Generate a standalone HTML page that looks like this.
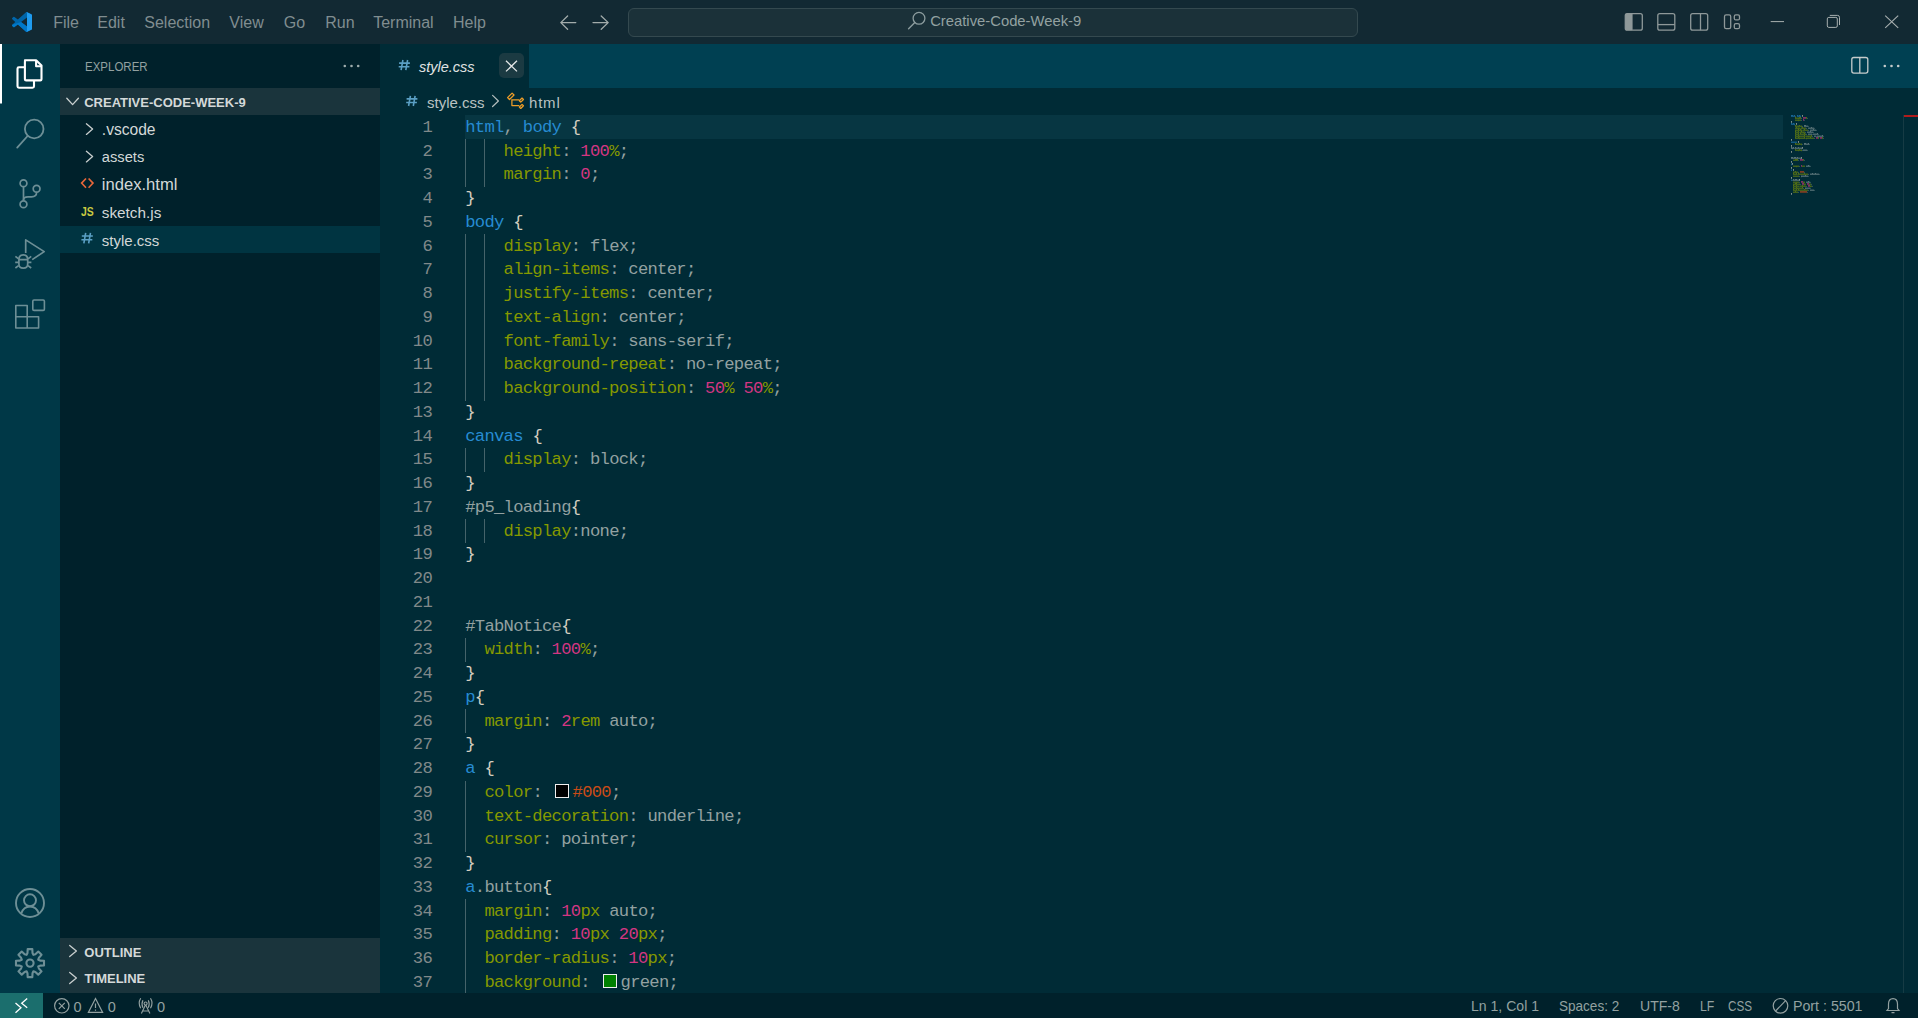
<!DOCTYPE html>
<html><head><meta charset="utf-8">
<style>
*{box-sizing:border-box;margin:0;padding:0}
html,body{width:1918px;height:1018px;overflow:hidden;background:#002b36;font-family:"Liberation Sans",sans-serif}
.abs{position:absolute}
#title{position:absolute;left:0;top:0;width:1918px;height:44px;background:#122933}
.menu{position:absolute;top:0;height:44px;line-height:44px;font-size:16px;color:#8a9799}
#act{position:absolute;left:0;top:44px;width:60px;height:949px;background:#003847}
#side{position:absolute;left:60px;top:44px;width:320px;height:949px;background:#00212b}
#tabs{position:absolute;left:380px;top:44px;width:1538px;height:44px;background:#004052}
#tab1{position:absolute;left:380px;top:44px;width:149px;height:44px;background:#002b36}
#status{position:absolute;left:0;top:993px;width:1918px;height:25px;background:#00212b}
.ln{position:absolute;left:465.2px;height:23.75px;line-height:23.75px;font-family:"Liberation Mono",monospace;font-size:17.2px;letter-spacing:-0.72px;white-space:pre;color:#93a1a1}
.lnum{position:absolute;left:380px;width:52px;text-align:right;height:23.75px;line-height:23.75px;font-family:"Liberation Mono",monospace;font-size:17.2px;letter-spacing:-0.72px;color:#80898a}
.ig{position:absolute;width:1px;height:23.75px;background:#45636a}
.sw{display:inline-block;width:14px;height:14px;border:1.4px solid #eee;margin:0 3.5px;vertical-align:-1px}
.sb{position:absolute;color:#93a1a1;font-size:14px;top:993px;height:25px;line-height:25px;white-space:pre}
</style></head><body>
<div id="title"></div>
<div id="act"></div>
<div id="side"></div>
<div id="tabs"></div>
<div id="tab1"></div>
<!-- line highlight -->
<div class="abs" style="left:465px;top:115.2px;width:1318px;height:23.5px;background:#073642"></div>
<div class="ln" style="top:115.80px"><span style="color:#268bd2">html</span><span style="color:#93a1a1">, </span><span style="color:#268bd2">body</span><span style="color:#93a1a1"> </span><span style="color:#d4cfc0">{</span></div>
<div class="lnum" style="top:115.80px">1</div>
<div class="ln" style="top:139.55px">    <span style="color:#859900">height</span><span style="color:#93a1a1">: </span><span style="color:#d33682">100</span><span style="color:#859900">%</span><span style="color:#93a1a1">;</span></div>
<div class="lnum" style="top:139.55px">2</div>
<div class="ig" style="left:465px;top:139.25px"></div>
<div class="ig" style="left:484px;top:139.25px"></div>
<div class="ln" style="top:163.30px">    <span style="color:#859900">margin</span><span style="color:#93a1a1">: </span><span style="color:#d33682">0</span><span style="color:#93a1a1">;</span></div>
<div class="lnum" style="top:163.30px">3</div>
<div class="ig" style="left:465px;top:163.00px"></div>
<div class="ig" style="left:484px;top:163.00px"></div>
<div class="ln" style="top:187.05px"><span style="color:#d4cfc0">}</span></div>
<div class="lnum" style="top:187.05px">4</div>
<div class="ln" style="top:210.80px"><span style="color:#268bd2">body</span><span style="color:#93a1a1"> </span><span style="color:#d4cfc0">{</span></div>
<div class="lnum" style="top:210.80px">5</div>
<div class="ln" style="top:234.55px">    <span style="color:#859900">display</span><span style="color:#93a1a1">: </span><span style="color:#93a1a1">flex</span><span style="color:#93a1a1">;</span></div>
<div class="lnum" style="top:234.55px">6</div>
<div class="ig" style="left:465px;top:234.25px"></div>
<div class="ig" style="left:484px;top:234.25px"></div>
<div class="ln" style="top:258.30px">    <span style="color:#859900">align-items</span><span style="color:#93a1a1">: </span><span style="color:#93a1a1">center</span><span style="color:#93a1a1">;</span></div>
<div class="lnum" style="top:258.30px">7</div>
<div class="ig" style="left:465px;top:258.00px"></div>
<div class="ig" style="left:484px;top:258.00px"></div>
<div class="ln" style="top:282.05px">    <span style="color:#859900">justify-items</span><span style="color:#93a1a1">: </span><span style="color:#93a1a1">center</span><span style="color:#93a1a1">;</span></div>
<div class="lnum" style="top:282.05px">8</div>
<div class="ig" style="left:465px;top:281.75px"></div>
<div class="ig" style="left:484px;top:281.75px"></div>
<div class="ln" style="top:305.80px">    <span style="color:#859900">text-align</span><span style="color:#93a1a1">: </span><span style="color:#93a1a1">center</span><span style="color:#93a1a1">;</span></div>
<div class="lnum" style="top:305.80px">9</div>
<div class="ig" style="left:465px;top:305.50px"></div>
<div class="ig" style="left:484px;top:305.50px"></div>
<div class="ln" style="top:329.55px">    <span style="color:#859900">font-family</span><span style="color:#93a1a1">: </span><span style="color:#93a1a1">sans-serif</span><span style="color:#93a1a1">;</span></div>
<div class="lnum" style="top:329.55px">10</div>
<div class="ig" style="left:465px;top:329.25px"></div>
<div class="ig" style="left:484px;top:329.25px"></div>
<div class="ln" style="top:353.30px">    <span style="color:#859900">background-repeat</span><span style="color:#93a1a1">: </span><span style="color:#93a1a1">no-repeat</span><span style="color:#93a1a1">;</span></div>
<div class="lnum" style="top:353.30px">11</div>
<div class="ig" style="left:465px;top:353.00px"></div>
<div class="ig" style="left:484px;top:353.00px"></div>
<div class="ln" style="top:377.05px">    <span style="color:#859900">background-position</span><span style="color:#93a1a1">: </span><span style="color:#d33682">50</span><span style="color:#859900">%</span><span style="color:#93a1a1"> </span><span style="color:#d33682">50</span><span style="color:#859900">%</span><span style="color:#93a1a1">;</span></div>
<div class="lnum" style="top:377.05px">12</div>
<div class="ig" style="left:465px;top:376.75px"></div>
<div class="ig" style="left:484px;top:376.75px"></div>
<div class="ln" style="top:400.80px"><span style="color:#d4cfc0">}</span></div>
<div class="lnum" style="top:400.80px">13</div>
<div class="ln" style="top:424.55px"><span style="color:#268bd2">canvas</span><span style="color:#93a1a1"> </span><span style="color:#d4cfc0">{</span></div>
<div class="lnum" style="top:424.55px">14</div>
<div class="ln" style="top:448.30px">    <span style="color:#859900">display</span><span style="color:#93a1a1">: </span><span style="color:#93a1a1">block</span><span style="color:#93a1a1">;</span></div>
<div class="lnum" style="top:448.30px">15</div>
<div class="ig" style="left:465px;top:448.00px"></div>
<div class="ig" style="left:484px;top:448.00px"></div>
<div class="ln" style="top:472.05px"><span style="color:#d4cfc0">}</span></div>
<div class="lnum" style="top:472.05px">16</div>
<div class="ln" style="top:495.80px"><span style="color:#93a1a1">#p5_loading</span><span style="color:#d4cfc0">{</span></div>
<div class="lnum" style="top:495.80px">17</div>
<div class="ln" style="top:519.55px">    <span style="color:#859900">display</span><span style="color:#93a1a1">:</span><span style="color:#93a1a1">none</span><span style="color:#93a1a1">;</span></div>
<div class="lnum" style="top:519.55px">18</div>
<div class="ig" style="left:465px;top:519.25px"></div>
<div class="ig" style="left:484px;top:519.25px"></div>
<div class="ln" style="top:543.30px"><span style="color:#d4cfc0">}</span></div>
<div class="lnum" style="top:543.30px">19</div>
<div class="ln" style="top:567.05px"></div>
<div class="lnum" style="top:567.05px">20</div>
<div class="ln" style="top:590.80px"></div>
<div class="lnum" style="top:590.80px">21</div>
<div class="ln" style="top:614.55px"><span style="color:#93a1a1">#TabNotice</span><span style="color:#d4cfc0">{</span></div>
<div class="lnum" style="top:614.55px">22</div>
<div class="ln" style="top:638.30px">  <span style="color:#859900">width</span><span style="color:#93a1a1">: </span><span style="color:#d33682">100</span><span style="color:#859900">%</span><span style="color:#93a1a1">;</span></div>
<div class="lnum" style="top:638.30px">23</div>
<div class="ig" style="left:465px;top:638.00px"></div>
<div class="ln" style="top:662.05px"><span style="color:#d4cfc0">}</span></div>
<div class="lnum" style="top:662.05px">24</div>
<div class="ln" style="top:685.80px"><span style="color:#268bd2">p</span><span style="color:#d4cfc0">{</span></div>
<div class="lnum" style="top:685.80px">25</div>
<div class="ln" style="top:709.55px">  <span style="color:#859900">margin</span><span style="color:#93a1a1">: </span><span style="color:#d33682">2</span><span style="color:#859900">rem</span><span style="color:#93a1a1"> </span><span style="color:#93a1a1">auto</span><span style="color:#93a1a1">;</span></div>
<div class="lnum" style="top:709.55px">26</div>
<div class="ig" style="left:465px;top:709.25px"></div>
<div class="ln" style="top:733.30px"><span style="color:#d4cfc0">}</span></div>
<div class="lnum" style="top:733.30px">27</div>
<div class="ln" style="top:757.05px"><span style="color:#268bd2">a</span><span style="color:#93a1a1"> </span><span style="color:#d4cfc0">{</span></div>
<div class="lnum" style="top:757.05px">28</div>
<div class="ln" style="top:780.80px">  <span style="color:#859900">color</span><span style="color:#93a1a1">: </span><span class="sw" style="background:#000"></span><span style="color:#cb4b16">#000</span><span style="color:#93a1a1">;</span></div>
<div class="lnum" style="top:780.80px">29</div>
<div class="ig" style="left:465px;top:780.50px"></div>
<div class="ln" style="top:804.55px">  <span style="color:#859900">text-decoration</span><span style="color:#93a1a1">: </span><span style="color:#93a1a1">underline</span><span style="color:#93a1a1">;</span></div>
<div class="lnum" style="top:804.55px">30</div>
<div class="ig" style="left:465px;top:804.25px"></div>
<div class="ln" style="top:828.30px">  <span style="color:#859900">cursor</span><span style="color:#93a1a1">: </span><span style="color:#93a1a1">pointer</span><span style="color:#93a1a1">;</span></div>
<div class="lnum" style="top:828.30px">31</div>
<div class="ig" style="left:465px;top:828.00px"></div>
<div class="ln" style="top:852.05px"><span style="color:#d4cfc0">}</span></div>
<div class="lnum" style="top:852.05px">32</div>
<div class="ln" style="top:875.80px"><span style="color:#268bd2">a</span><span style="color:#93a1a1">.button</span><span style="color:#d4cfc0">{</span></div>
<div class="lnum" style="top:875.80px">33</div>
<div class="ln" style="top:899.55px">  <span style="color:#859900">margin</span><span style="color:#93a1a1">: </span><span style="color:#d33682">10</span><span style="color:#859900">px</span><span style="color:#93a1a1"> </span><span style="color:#93a1a1">auto</span><span style="color:#93a1a1">;</span></div>
<div class="lnum" style="top:899.55px">34</div>
<div class="ig" style="left:465px;top:899.25px"></div>
<div class="ln" style="top:923.30px">  <span style="color:#859900">padding</span><span style="color:#93a1a1">: </span><span style="color:#d33682">10</span><span style="color:#859900">px</span><span style="color:#93a1a1"> </span><span style="color:#d33682">20</span><span style="color:#859900">px</span><span style="color:#93a1a1">;</span></div>
<div class="lnum" style="top:923.30px">35</div>
<div class="ig" style="left:465px;top:923.00px"></div>
<div class="ln" style="top:947.05px">  <span style="color:#859900">border-radius</span><span style="color:#93a1a1">: </span><span style="color:#d33682">10</span><span style="color:#859900">px</span><span style="color:#93a1a1">;</span></div>
<div class="lnum" style="top:947.05px">36</div>
<div class="ig" style="left:465px;top:946.75px"></div>
<div class="ln" style="top:970.80px">  <span style="color:#859900">background</span><span style="color:#93a1a1">: </span><span class="sw" style="background:#008000"></span><span style="color:#93a1a1">green</span><span style="color:#93a1a1">;</span></div>
<div class="lnum" style="top:970.80px">37</div>
<div class="ig" style="left:465px;top:970.50px"></div>
<svg class="mm" width="1918" height="300" style="position:absolute;left:0;top:0"><rect x="1791" y="115.0" width="1" height="1.8" fill="#268bd2" fill-opacity="0.6"/><rect x="1792" y="115.0" width="1" height="1.8" fill="#268bd2" fill-opacity="0.6"/><rect x="1793" y="115.6" width="1" height="1.2" fill="#268bd2" fill-opacity="0.6"/><rect x="1794" y="115.0" width="1" height="1.8" fill="#268bd2" fill-opacity="0.6"/><rect x="1795" y="115.9" width="1" height="0.8" fill="#93a1a1" fill-opacity="0.45"/><rect x="1797" y="115.0" width="1" height="1.8" fill="#268bd2" fill-opacity="0.6"/><rect x="1798" y="115.6" width="1" height="1.2" fill="#268bd2" fill-opacity="0.6"/><rect x="1799" y="115.0" width="1" height="1.8" fill="#268bd2" fill-opacity="0.6"/><rect x="1800" y="115.5" width="1" height="1.7" fill="#268bd2" fill-opacity="0.55"/><rect x="1802" y="115.0" width="1" height="1.8" fill="#d4cfc0" fill-opacity="0.6"/><rect x="1795" y="117.0" width="1" height="1.8" fill="#859900" fill-opacity="0.6"/><rect x="1796" y="117.6" width="1" height="1.2" fill="#859900" fill-opacity="0.6"/><rect x="1797" y="117.6" width="1" height="1.2" fill="#859900" fill-opacity="0.6"/><rect x="1798" y="117.5" width="1" height="1.7" fill="#859900" fill-opacity="0.55"/><rect x="1799" y="117.0" width="1" height="1.8" fill="#859900" fill-opacity="0.6"/><rect x="1800" y="117.0" width="1" height="1.8" fill="#859900" fill-opacity="0.6"/><rect x="1801" y="117.9" width="1" height="0.8" fill="#93a1a1" fill-opacity="0.45"/><rect x="1803" y="117.0" width="1" height="1.8" fill="#d33682" fill-opacity="0.6"/><rect x="1804" y="117.0" width="1" height="1.8" fill="#d33682" fill-opacity="0.6"/><rect x="1805" y="117.0" width="1" height="1.8" fill="#d33682" fill-opacity="0.6"/><rect x="1806" y="117.0" width="1" height="1.8" fill="#859900" fill-opacity="0.6"/><rect x="1807" y="117.9" width="1" height="0.8" fill="#93a1a1" fill-opacity="0.45"/><rect x="1795" y="119.6" width="1" height="1.2" fill="#859900" fill-opacity="0.6"/><rect x="1796" y="119.6" width="1" height="1.2" fill="#859900" fill-opacity="0.6"/><rect x="1797" y="119.6" width="1" height="1.2" fill="#859900" fill-opacity="0.6"/><rect x="1798" y="119.5" width="1" height="1.7" fill="#859900" fill-opacity="0.55"/><rect x="1799" y="119.6" width="1" height="1.2" fill="#859900" fill-opacity="0.6"/><rect x="1800" y="119.6" width="1" height="1.2" fill="#859900" fill-opacity="0.6"/><rect x="1801" y="119.9" width="1" height="0.8" fill="#93a1a1" fill-opacity="0.45"/><rect x="1803" y="119.0" width="1" height="1.8" fill="#d33682" fill-opacity="0.6"/><rect x="1804" y="119.9" width="1" height="0.8" fill="#93a1a1" fill-opacity="0.45"/><rect x="1791" y="121.0" width="1" height="1.8" fill="#d4cfc0" fill-opacity="0.6"/><rect x="1791" y="123.0" width="1" height="1.8" fill="#268bd2" fill-opacity="0.6"/><rect x="1792" y="123.6" width="1" height="1.2" fill="#268bd2" fill-opacity="0.6"/><rect x="1793" y="123.0" width="1" height="1.8" fill="#268bd2" fill-opacity="0.6"/><rect x="1794" y="123.5" width="1" height="1.7" fill="#268bd2" fill-opacity="0.55"/><rect x="1796" y="123.0" width="1" height="1.8" fill="#d4cfc0" fill-opacity="0.6"/><rect x="1795" y="125.0" width="1" height="1.8" fill="#859900" fill-opacity="0.6"/><rect x="1796" y="125.6" width="1" height="1.2" fill="#859900" fill-opacity="0.6"/><rect x="1797" y="125.6" width="1" height="1.2" fill="#859900" fill-opacity="0.6"/><rect x="1798" y="125.5" width="1" height="1.7" fill="#859900" fill-opacity="0.55"/><rect x="1799" y="125.0" width="1" height="1.8" fill="#859900" fill-opacity="0.6"/><rect x="1800" y="125.6" width="1" height="1.2" fill="#859900" fill-opacity="0.6"/><rect x="1801" y="125.5" width="1" height="1.7" fill="#859900" fill-opacity="0.55"/><rect x="1802" y="125.9" width="1" height="0.8" fill="#93a1a1" fill-opacity="0.45"/><rect x="1804" y="125.0" width="1" height="1.8" fill="#93a1a1" fill-opacity="0.6"/><rect x="1805" y="125.0" width="1" height="1.8" fill="#93a1a1" fill-opacity="0.6"/><rect x="1806" y="125.6" width="1" height="1.2" fill="#93a1a1" fill-opacity="0.6"/><rect x="1807" y="125.6" width="1" height="1.2" fill="#93a1a1" fill-opacity="0.6"/><rect x="1808" y="125.9" width="1" height="0.8" fill="#93a1a1" fill-opacity="0.45"/><rect x="1795" y="127.6" width="1" height="1.2" fill="#859900" fill-opacity="0.6"/><rect x="1796" y="127.0" width="1" height="1.8" fill="#859900" fill-opacity="0.6"/><rect x="1797" y="127.6" width="1" height="1.2" fill="#859900" fill-opacity="0.6"/><rect x="1798" y="127.5" width="1" height="1.7" fill="#859900" fill-opacity="0.55"/><rect x="1799" y="127.6" width="1" height="1.2" fill="#859900" fill-opacity="0.6"/><rect x="1800" y="127.9" width="1" height="0.8" fill="#859900" fill-opacity="0.45"/><rect x="1801" y="127.6" width="1" height="1.2" fill="#859900" fill-opacity="0.6"/><rect x="1802" y="127.0" width="1" height="1.8" fill="#859900" fill-opacity="0.6"/><rect x="1803" y="127.6" width="1" height="1.2" fill="#859900" fill-opacity="0.6"/><rect x="1804" y="127.6" width="1" height="1.2" fill="#859900" fill-opacity="0.6"/><rect x="1805" y="127.6" width="1" height="1.2" fill="#859900" fill-opacity="0.6"/><rect x="1806" y="127.9" width="1" height="0.8" fill="#93a1a1" fill-opacity="0.45"/><rect x="1808" y="127.6" width="1" height="1.2" fill="#93a1a1" fill-opacity="0.6"/><rect x="1809" y="127.6" width="1" height="1.2" fill="#93a1a1" fill-opacity="0.6"/><rect x="1810" y="127.6" width="1" height="1.2" fill="#93a1a1" fill-opacity="0.6"/><rect x="1811" y="127.0" width="1" height="1.8" fill="#93a1a1" fill-opacity="0.6"/><rect x="1812" y="127.6" width="1" height="1.2" fill="#93a1a1" fill-opacity="0.6"/><rect x="1813" y="127.6" width="1" height="1.2" fill="#93a1a1" fill-opacity="0.6"/><rect x="1814" y="127.9" width="1" height="0.8" fill="#93a1a1" fill-opacity="0.45"/><rect x="1795" y="129.5" width="1" height="1.7" fill="#859900" fill-opacity="0.55"/><rect x="1796" y="129.6" width="1" height="1.2" fill="#859900" fill-opacity="0.6"/><rect x="1797" y="129.6" width="1" height="1.2" fill="#859900" fill-opacity="0.6"/><rect x="1798" y="129.0" width="1" height="1.8" fill="#859900" fill-opacity="0.6"/><rect x="1799" y="129.6" width="1" height="1.2" fill="#859900" fill-opacity="0.6"/><rect x="1800" y="129.0" width="1" height="1.8" fill="#859900" fill-opacity="0.6"/><rect x="1801" y="129.5" width="1" height="1.7" fill="#859900" fill-opacity="0.55"/><rect x="1802" y="129.9" width="1" height="0.8" fill="#859900" fill-opacity="0.45"/><rect x="1803" y="129.6" width="1" height="1.2" fill="#859900" fill-opacity="0.6"/><rect x="1804" y="129.0" width="1" height="1.8" fill="#859900" fill-opacity="0.6"/><rect x="1805" y="129.6" width="1" height="1.2" fill="#859900" fill-opacity="0.6"/><rect x="1806" y="129.6" width="1" height="1.2" fill="#859900" fill-opacity="0.6"/><rect x="1807" y="129.6" width="1" height="1.2" fill="#859900" fill-opacity="0.6"/><rect x="1808" y="129.9" width="1" height="0.8" fill="#93a1a1" fill-opacity="0.45"/><rect x="1810" y="129.6" width="1" height="1.2" fill="#93a1a1" fill-opacity="0.6"/><rect x="1811" y="129.6" width="1" height="1.2" fill="#93a1a1" fill-opacity="0.6"/><rect x="1812" y="129.6" width="1" height="1.2" fill="#93a1a1" fill-opacity="0.6"/><rect x="1813" y="129.0" width="1" height="1.8" fill="#93a1a1" fill-opacity="0.6"/><rect x="1814" y="129.6" width="1" height="1.2" fill="#93a1a1" fill-opacity="0.6"/><rect x="1815" y="129.6" width="1" height="1.2" fill="#93a1a1" fill-opacity="0.6"/><rect x="1816" y="129.9" width="1" height="0.8" fill="#93a1a1" fill-opacity="0.45"/><rect x="1795" y="131.0" width="1" height="1.8" fill="#859900" fill-opacity="0.6"/><rect x="1796" y="131.6" width="1" height="1.2" fill="#859900" fill-opacity="0.6"/><rect x="1797" y="131.6" width="1" height="1.2" fill="#859900" fill-opacity="0.6"/><rect x="1798" y="131.0" width="1" height="1.8" fill="#859900" fill-opacity="0.6"/><rect x="1799" y="131.9" width="1" height="0.8" fill="#859900" fill-opacity="0.45"/><rect x="1800" y="131.6" width="1" height="1.2" fill="#859900" fill-opacity="0.6"/><rect x="1801" y="131.0" width="1" height="1.8" fill="#859900" fill-opacity="0.6"/><rect x="1802" y="131.6" width="1" height="1.2" fill="#859900" fill-opacity="0.6"/><rect x="1803" y="131.5" width="1" height="1.7" fill="#859900" fill-opacity="0.55"/><rect x="1804" y="131.6" width="1" height="1.2" fill="#859900" fill-opacity="0.6"/><rect x="1805" y="131.9" width="1" height="0.8" fill="#93a1a1" fill-opacity="0.45"/><rect x="1807" y="131.6" width="1" height="1.2" fill="#93a1a1" fill-opacity="0.6"/><rect x="1808" y="131.6" width="1" height="1.2" fill="#93a1a1" fill-opacity="0.6"/><rect x="1809" y="131.6" width="1" height="1.2" fill="#93a1a1" fill-opacity="0.6"/><rect x="1810" y="131.0" width="1" height="1.8" fill="#93a1a1" fill-opacity="0.6"/><rect x="1811" y="131.6" width="1" height="1.2" fill="#93a1a1" fill-opacity="0.6"/><rect x="1812" y="131.6" width="1" height="1.2" fill="#93a1a1" fill-opacity="0.6"/><rect x="1813" y="131.9" width="1" height="0.8" fill="#93a1a1" fill-opacity="0.45"/><rect x="1795" y="133.0" width="1" height="1.8" fill="#859900" fill-opacity="0.6"/><rect x="1796" y="133.6" width="1" height="1.2" fill="#859900" fill-opacity="0.6"/><rect x="1797" y="133.6" width="1" height="1.2" fill="#859900" fill-opacity="0.6"/><rect x="1798" y="133.0" width="1" height="1.8" fill="#859900" fill-opacity="0.6"/><rect x="1799" y="133.9" width="1" height="0.8" fill="#859900" fill-opacity="0.45"/><rect x="1800" y="133.0" width="1" height="1.8" fill="#859900" fill-opacity="0.6"/><rect x="1801" y="133.6" width="1" height="1.2" fill="#859900" fill-opacity="0.6"/><rect x="1802" y="133.6" width="1" height="1.2" fill="#859900" fill-opacity="0.6"/><rect x="1803" y="133.6" width="1" height="1.2" fill="#859900" fill-opacity="0.6"/><rect x="1804" y="133.0" width="1" height="1.8" fill="#859900" fill-opacity="0.6"/><rect x="1805" y="133.5" width="1" height="1.7" fill="#859900" fill-opacity="0.55"/><rect x="1806" y="133.9" width="1" height="0.8" fill="#93a1a1" fill-opacity="0.45"/><rect x="1808" y="133.6" width="1" height="1.2" fill="#93a1a1" fill-opacity="0.6"/><rect x="1809" y="133.6" width="1" height="1.2" fill="#93a1a1" fill-opacity="0.6"/><rect x="1810" y="133.6" width="1" height="1.2" fill="#93a1a1" fill-opacity="0.6"/><rect x="1811" y="133.6" width="1" height="1.2" fill="#93a1a1" fill-opacity="0.6"/><rect x="1812" y="133.9" width="1" height="0.8" fill="#93a1a1" fill-opacity="0.45"/><rect x="1813" y="133.6" width="1" height="1.2" fill="#93a1a1" fill-opacity="0.6"/><rect x="1814" y="133.6" width="1" height="1.2" fill="#93a1a1" fill-opacity="0.6"/><rect x="1815" y="133.6" width="1" height="1.2" fill="#93a1a1" fill-opacity="0.6"/><rect x="1816" y="133.6" width="1" height="1.2" fill="#93a1a1" fill-opacity="0.6"/><rect x="1817" y="133.0" width="1" height="1.8" fill="#93a1a1" fill-opacity="0.6"/><rect x="1818" y="133.9" width="1" height="0.8" fill="#93a1a1" fill-opacity="0.45"/><rect x="1795" y="135.0" width="1" height="1.8" fill="#859900" fill-opacity="0.6"/><rect x="1796" y="135.6" width="1" height="1.2" fill="#859900" fill-opacity="0.6"/><rect x="1797" y="135.6" width="1" height="1.2" fill="#859900" fill-opacity="0.6"/><rect x="1798" y="135.0" width="1" height="1.8" fill="#859900" fill-opacity="0.6"/><rect x="1799" y="135.5" width="1" height="1.7" fill="#859900" fill-opacity="0.55"/><rect x="1800" y="135.6" width="1" height="1.2" fill="#859900" fill-opacity="0.6"/><rect x="1801" y="135.6" width="1" height="1.2" fill="#859900" fill-opacity="0.6"/><rect x="1802" y="135.6" width="1" height="1.2" fill="#859900" fill-opacity="0.6"/><rect x="1803" y="135.6" width="1" height="1.2" fill="#859900" fill-opacity="0.6"/><rect x="1804" y="135.0" width="1" height="1.8" fill="#859900" fill-opacity="0.6"/><rect x="1805" y="135.9" width="1" height="0.8" fill="#859900" fill-opacity="0.45"/><rect x="1806" y="135.6" width="1" height="1.2" fill="#859900" fill-opacity="0.6"/><rect x="1807" y="135.6" width="1" height="1.2" fill="#859900" fill-opacity="0.6"/><rect x="1808" y="135.5" width="1" height="1.7" fill="#859900" fill-opacity="0.55"/><rect x="1809" y="135.6" width="1" height="1.2" fill="#859900" fill-opacity="0.6"/><rect x="1810" y="135.6" width="1" height="1.2" fill="#859900" fill-opacity="0.6"/><rect x="1811" y="135.0" width="1" height="1.8" fill="#859900" fill-opacity="0.6"/><rect x="1812" y="135.9" width="1" height="0.8" fill="#93a1a1" fill-opacity="0.45"/><rect x="1814" y="135.6" width="1" height="1.2" fill="#93a1a1" fill-opacity="0.6"/><rect x="1815" y="135.6" width="1" height="1.2" fill="#93a1a1" fill-opacity="0.6"/><rect x="1816" y="135.9" width="1" height="0.8" fill="#93a1a1" fill-opacity="0.45"/><rect x="1817" y="135.6" width="1" height="1.2" fill="#93a1a1" fill-opacity="0.6"/><rect x="1818" y="135.6" width="1" height="1.2" fill="#93a1a1" fill-opacity="0.6"/><rect x="1819" y="135.5" width="1" height="1.7" fill="#93a1a1" fill-opacity="0.55"/><rect x="1820" y="135.6" width="1" height="1.2" fill="#93a1a1" fill-opacity="0.6"/><rect x="1821" y="135.6" width="1" height="1.2" fill="#93a1a1" fill-opacity="0.6"/><rect x="1822" y="135.0" width="1" height="1.8" fill="#93a1a1" fill-opacity="0.6"/><rect x="1823" y="135.9" width="1" height="0.8" fill="#93a1a1" fill-opacity="0.45"/><rect x="1795" y="137.0" width="1" height="1.8" fill="#859900" fill-opacity="0.6"/><rect x="1796" y="137.6" width="1" height="1.2" fill="#859900" fill-opacity="0.6"/><rect x="1797" y="137.6" width="1" height="1.2" fill="#859900" fill-opacity="0.6"/><rect x="1798" y="137.0" width="1" height="1.8" fill="#859900" fill-opacity="0.6"/><rect x="1799" y="137.5" width="1" height="1.7" fill="#859900" fill-opacity="0.55"/><rect x="1800" y="137.6" width="1" height="1.2" fill="#859900" fill-opacity="0.6"/><rect x="1801" y="137.6" width="1" height="1.2" fill="#859900" fill-opacity="0.6"/><rect x="1802" y="137.6" width="1" height="1.2" fill="#859900" fill-opacity="0.6"/><rect x="1803" y="137.6" width="1" height="1.2" fill="#859900" fill-opacity="0.6"/><rect x="1804" y="137.0" width="1" height="1.8" fill="#859900" fill-opacity="0.6"/><rect x="1805" y="137.9" width="1" height="0.8" fill="#859900" fill-opacity="0.45"/><rect x="1806" y="137.5" width="1" height="1.7" fill="#859900" fill-opacity="0.55"/><rect x="1807" y="137.6" width="1" height="1.2" fill="#859900" fill-opacity="0.6"/><rect x="1808" y="137.6" width="1" height="1.2" fill="#859900" fill-opacity="0.6"/><rect x="1809" y="137.6" width="1" height="1.2" fill="#859900" fill-opacity="0.6"/><rect x="1810" y="137.0" width="1" height="1.8" fill="#859900" fill-opacity="0.6"/><rect x="1811" y="137.6" width="1" height="1.2" fill="#859900" fill-opacity="0.6"/><rect x="1812" y="137.6" width="1" height="1.2" fill="#859900" fill-opacity="0.6"/><rect x="1813" y="137.6" width="1" height="1.2" fill="#859900" fill-opacity="0.6"/><rect x="1814" y="137.9" width="1" height="0.8" fill="#93a1a1" fill-opacity="0.45"/><rect x="1816" y="137.0" width="1" height="1.8" fill="#d33682" fill-opacity="0.6"/><rect x="1817" y="137.0" width="1" height="1.8" fill="#d33682" fill-opacity="0.6"/><rect x="1818" y="137.0" width="1" height="1.8" fill="#859900" fill-opacity="0.6"/><rect x="1820" y="137.0" width="1" height="1.8" fill="#d33682" fill-opacity="0.6"/><rect x="1821" y="137.0" width="1" height="1.8" fill="#d33682" fill-opacity="0.6"/><rect x="1822" y="137.0" width="1" height="1.8" fill="#859900" fill-opacity="0.6"/><rect x="1823" y="137.9" width="1" height="0.8" fill="#93a1a1" fill-opacity="0.45"/><rect x="1791" y="139.0" width="1" height="1.8" fill="#d4cfc0" fill-opacity="0.6"/><rect x="1791" y="141.6" width="1" height="1.2" fill="#268bd2" fill-opacity="0.6"/><rect x="1792" y="141.6" width="1" height="1.2" fill="#268bd2" fill-opacity="0.6"/><rect x="1793" y="141.6" width="1" height="1.2" fill="#268bd2" fill-opacity="0.6"/><rect x="1794" y="141.6" width="1" height="1.2" fill="#268bd2" fill-opacity="0.6"/><rect x="1795" y="141.6" width="1" height="1.2" fill="#268bd2" fill-opacity="0.6"/><rect x="1796" y="141.6" width="1" height="1.2" fill="#268bd2" fill-opacity="0.6"/><rect x="1798" y="141.0" width="1" height="1.8" fill="#d4cfc0" fill-opacity="0.6"/><rect x="1795" y="143.0" width="1" height="1.8" fill="#859900" fill-opacity="0.6"/><rect x="1796" y="143.6" width="1" height="1.2" fill="#859900" fill-opacity="0.6"/><rect x="1797" y="143.6" width="1" height="1.2" fill="#859900" fill-opacity="0.6"/><rect x="1798" y="143.5" width="1" height="1.7" fill="#859900" fill-opacity="0.55"/><rect x="1799" y="143.0" width="1" height="1.8" fill="#859900" fill-opacity="0.6"/><rect x="1800" y="143.6" width="1" height="1.2" fill="#859900" fill-opacity="0.6"/><rect x="1801" y="143.5" width="1" height="1.7" fill="#859900" fill-opacity="0.55"/><rect x="1802" y="143.9" width="1" height="0.8" fill="#93a1a1" fill-opacity="0.45"/><rect x="1804" y="143.0" width="1" height="1.8" fill="#93a1a1" fill-opacity="0.6"/><rect x="1805" y="143.0" width="1" height="1.8" fill="#93a1a1" fill-opacity="0.6"/><rect x="1806" y="143.6" width="1" height="1.2" fill="#93a1a1" fill-opacity="0.6"/><rect x="1807" y="143.6" width="1" height="1.2" fill="#93a1a1" fill-opacity="0.6"/><rect x="1808" y="143.0" width="1" height="1.8" fill="#93a1a1" fill-opacity="0.6"/><rect x="1809" y="143.9" width="1" height="0.8" fill="#93a1a1" fill-opacity="0.45"/><rect x="1791" y="145.0" width="1" height="1.8" fill="#d4cfc0" fill-opacity="0.6"/><rect x="1791" y="147.0" width="1" height="1.8" fill="#93a1a1" fill-opacity="0.6"/><rect x="1792" y="147.5" width="1" height="1.7" fill="#93a1a1" fill-opacity="0.55"/><rect x="1793" y="147.0" width="1" height="1.8" fill="#93a1a1" fill-opacity="0.6"/><rect x="1794" y="147.9" width="1" height="0.8" fill="#93a1a1" fill-opacity="0.45"/><rect x="1795" y="147.0" width="1" height="1.8" fill="#93a1a1" fill-opacity="0.6"/><rect x="1796" y="147.6" width="1" height="1.2" fill="#93a1a1" fill-opacity="0.6"/><rect x="1797" y="147.6" width="1" height="1.2" fill="#93a1a1" fill-opacity="0.6"/><rect x="1798" y="147.0" width="1" height="1.8" fill="#93a1a1" fill-opacity="0.6"/><rect x="1799" y="147.6" width="1" height="1.2" fill="#93a1a1" fill-opacity="0.6"/><rect x="1800" y="147.6" width="1" height="1.2" fill="#93a1a1" fill-opacity="0.6"/><rect x="1801" y="147.5" width="1" height="1.7" fill="#93a1a1" fill-opacity="0.55"/><rect x="1802" y="147.0" width="1" height="1.8" fill="#d4cfc0" fill-opacity="0.6"/><rect x="1795" y="149.0" width="1" height="1.8" fill="#859900" fill-opacity="0.6"/><rect x="1796" y="149.6" width="1" height="1.2" fill="#859900" fill-opacity="0.6"/><rect x="1797" y="149.6" width="1" height="1.2" fill="#859900" fill-opacity="0.6"/><rect x="1798" y="149.5" width="1" height="1.7" fill="#859900" fill-opacity="0.55"/><rect x="1799" y="149.0" width="1" height="1.8" fill="#859900" fill-opacity="0.6"/><rect x="1800" y="149.6" width="1" height="1.2" fill="#859900" fill-opacity="0.6"/><rect x="1801" y="149.5" width="1" height="1.7" fill="#859900" fill-opacity="0.55"/><rect x="1802" y="149.9" width="1" height="0.8" fill="#93a1a1" fill-opacity="0.45"/><rect x="1803" y="149.6" width="1" height="1.2" fill="#93a1a1" fill-opacity="0.6"/><rect x="1804" y="149.6" width="1" height="1.2" fill="#93a1a1" fill-opacity="0.6"/><rect x="1805" y="149.6" width="1" height="1.2" fill="#93a1a1" fill-opacity="0.6"/><rect x="1806" y="149.6" width="1" height="1.2" fill="#93a1a1" fill-opacity="0.6"/><rect x="1807" y="149.9" width="1" height="0.8" fill="#93a1a1" fill-opacity="0.45"/><rect x="1791" y="151.0" width="1" height="1.8" fill="#d4cfc0" fill-opacity="0.6"/><rect x="1791" y="157.0" width="1" height="1.8" fill="#93a1a1" fill-opacity="0.6"/><rect x="1792" y="157.0" width="1" height="1.8" fill="#93a1a1" fill-opacity="0.6"/><rect x="1793" y="157.6" width="1" height="1.2" fill="#93a1a1" fill-opacity="0.6"/><rect x="1794" y="157.0" width="1" height="1.8" fill="#93a1a1" fill-opacity="0.6"/><rect x="1795" y="157.0" width="1" height="1.8" fill="#93a1a1" fill-opacity="0.6"/><rect x="1796" y="157.6" width="1" height="1.2" fill="#93a1a1" fill-opacity="0.6"/><rect x="1797" y="157.0" width="1" height="1.8" fill="#93a1a1" fill-opacity="0.6"/><rect x="1798" y="157.6" width="1" height="1.2" fill="#93a1a1" fill-opacity="0.6"/><rect x="1799" y="157.6" width="1" height="1.2" fill="#93a1a1" fill-opacity="0.6"/><rect x="1800" y="157.6" width="1" height="1.2" fill="#93a1a1" fill-opacity="0.6"/><rect x="1801" y="157.0" width="1" height="1.8" fill="#d4cfc0" fill-opacity="0.6"/><rect x="1793" y="159.6" width="1" height="1.2" fill="#859900" fill-opacity="0.6"/><rect x="1794" y="159.6" width="1" height="1.2" fill="#859900" fill-opacity="0.6"/><rect x="1795" y="159.0" width="1" height="1.8" fill="#859900" fill-opacity="0.6"/><rect x="1796" y="159.0" width="1" height="1.8" fill="#859900" fill-opacity="0.6"/><rect x="1797" y="159.0" width="1" height="1.8" fill="#859900" fill-opacity="0.6"/><rect x="1798" y="159.9" width="1" height="0.8" fill="#93a1a1" fill-opacity="0.45"/><rect x="1800" y="159.0" width="1" height="1.8" fill="#d33682" fill-opacity="0.6"/><rect x="1801" y="159.0" width="1" height="1.8" fill="#d33682" fill-opacity="0.6"/><rect x="1802" y="159.0" width="1" height="1.8" fill="#d33682" fill-opacity="0.6"/><rect x="1803" y="159.0" width="1" height="1.8" fill="#859900" fill-opacity="0.6"/><rect x="1804" y="159.9" width="1" height="0.8" fill="#93a1a1" fill-opacity="0.45"/><rect x="1791" y="161.0" width="1" height="1.8" fill="#d4cfc0" fill-opacity="0.6"/><rect x="1791" y="163.5" width="1" height="1.7" fill="#268bd2" fill-opacity="0.55"/><rect x="1792" y="163.0" width="1" height="1.8" fill="#d4cfc0" fill-opacity="0.6"/><rect x="1793" y="165.6" width="1" height="1.2" fill="#859900" fill-opacity="0.6"/><rect x="1794" y="165.6" width="1" height="1.2" fill="#859900" fill-opacity="0.6"/><rect x="1795" y="165.6" width="1" height="1.2" fill="#859900" fill-opacity="0.6"/><rect x="1796" y="165.5" width="1" height="1.7" fill="#859900" fill-opacity="0.55"/><rect x="1797" y="165.6" width="1" height="1.2" fill="#859900" fill-opacity="0.6"/><rect x="1798" y="165.6" width="1" height="1.2" fill="#859900" fill-opacity="0.6"/><rect x="1799" y="165.9" width="1" height="0.8" fill="#93a1a1" fill-opacity="0.45"/><rect x="1801" y="165.0" width="1" height="1.8" fill="#d33682" fill-opacity="0.6"/><rect x="1802" y="165.6" width="1" height="1.2" fill="#859900" fill-opacity="0.6"/><rect x="1803" y="165.6" width="1" height="1.2" fill="#859900" fill-opacity="0.6"/><rect x="1804" y="165.6" width="1" height="1.2" fill="#859900" fill-opacity="0.6"/><rect x="1806" y="165.6" width="1" height="1.2" fill="#93a1a1" fill-opacity="0.6"/><rect x="1807" y="165.6" width="1" height="1.2" fill="#93a1a1" fill-opacity="0.6"/><rect x="1808" y="165.0" width="1" height="1.8" fill="#93a1a1" fill-opacity="0.6"/><rect x="1809" y="165.6" width="1" height="1.2" fill="#93a1a1" fill-opacity="0.6"/><rect x="1810" y="165.9" width="1" height="0.8" fill="#93a1a1" fill-opacity="0.45"/><rect x="1791" y="167.0" width="1" height="1.8" fill="#d4cfc0" fill-opacity="0.6"/><rect x="1791" y="169.6" width="1" height="1.2" fill="#268bd2" fill-opacity="0.6"/><rect x="1793" y="169.0" width="1" height="1.8" fill="#d4cfc0" fill-opacity="0.6"/><rect x="1793" y="171.6" width="1" height="1.2" fill="#859900" fill-opacity="0.6"/><rect x="1794" y="171.6" width="1" height="1.2" fill="#859900" fill-opacity="0.6"/><rect x="1795" y="171.0" width="1" height="1.8" fill="#859900" fill-opacity="0.6"/><rect x="1796" y="171.6" width="1" height="1.2" fill="#859900" fill-opacity="0.6"/><rect x="1797" y="171.6" width="1" height="1.2" fill="#859900" fill-opacity="0.6"/><rect x="1798" y="171.9" width="1" height="0.8" fill="#93a1a1" fill-opacity="0.45"/><rect x="1800" y="171.0" width="1" height="1.8" fill="#cb4b16" fill-opacity="0.6"/><rect x="1801" y="171.0" width="1" height="1.8" fill="#cb4b16" fill-opacity="0.6"/><rect x="1802" y="171.0" width="1" height="1.8" fill="#cb4b16" fill-opacity="0.6"/><rect x="1803" y="171.0" width="1" height="1.8" fill="#cb4b16" fill-opacity="0.6"/><rect x="1804" y="171.9" width="1" height="0.8" fill="#93a1a1" fill-opacity="0.45"/><rect x="1793" y="173.0" width="1" height="1.8" fill="#859900" fill-opacity="0.6"/><rect x="1794" y="173.6" width="1" height="1.2" fill="#859900" fill-opacity="0.6"/><rect x="1795" y="173.6" width="1" height="1.2" fill="#859900" fill-opacity="0.6"/><rect x="1796" y="173.0" width="1" height="1.8" fill="#859900" fill-opacity="0.6"/><rect x="1797" y="173.9" width="1" height="0.8" fill="#859900" fill-opacity="0.45"/><rect x="1798" y="173.0" width="1" height="1.8" fill="#859900" fill-opacity="0.6"/><rect x="1799" y="173.6" width="1" height="1.2" fill="#859900" fill-opacity="0.6"/><rect x="1800" y="173.6" width="1" height="1.2" fill="#859900" fill-opacity="0.6"/><rect x="1801" y="173.6" width="1" height="1.2" fill="#859900" fill-opacity="0.6"/><rect x="1802" y="173.6" width="1" height="1.2" fill="#859900" fill-opacity="0.6"/><rect x="1803" y="173.6" width="1" height="1.2" fill="#859900" fill-opacity="0.6"/><rect x="1804" y="173.0" width="1" height="1.8" fill="#859900" fill-opacity="0.6"/><rect x="1805" y="173.6" width="1" height="1.2" fill="#859900" fill-opacity="0.6"/><rect x="1806" y="173.6" width="1" height="1.2" fill="#859900" fill-opacity="0.6"/><rect x="1807" y="173.6" width="1" height="1.2" fill="#859900" fill-opacity="0.6"/><rect x="1808" y="173.9" width="1" height="0.8" fill="#93a1a1" fill-opacity="0.45"/><rect x="1810" y="173.6" width="1" height="1.2" fill="#93a1a1" fill-opacity="0.6"/><rect x="1811" y="173.6" width="1" height="1.2" fill="#93a1a1" fill-opacity="0.6"/><rect x="1812" y="173.0" width="1" height="1.8" fill="#93a1a1" fill-opacity="0.6"/><rect x="1813" y="173.6" width="1" height="1.2" fill="#93a1a1" fill-opacity="0.6"/><rect x="1814" y="173.6" width="1" height="1.2" fill="#93a1a1" fill-opacity="0.6"/><rect x="1815" y="173.0" width="1" height="1.8" fill="#93a1a1" fill-opacity="0.6"/><rect x="1816" y="173.6" width="1" height="1.2" fill="#93a1a1" fill-opacity="0.6"/><rect x="1817" y="173.6" width="1" height="1.2" fill="#93a1a1" fill-opacity="0.6"/><rect x="1818" y="173.6" width="1" height="1.2" fill="#93a1a1" fill-opacity="0.6"/><rect x="1819" y="173.9" width="1" height="0.8" fill="#93a1a1" fill-opacity="0.45"/><rect x="1793" y="175.6" width="1" height="1.2" fill="#859900" fill-opacity="0.6"/><rect x="1794" y="175.6" width="1" height="1.2" fill="#859900" fill-opacity="0.6"/><rect x="1795" y="175.6" width="1" height="1.2" fill="#859900" fill-opacity="0.6"/><rect x="1796" y="175.6" width="1" height="1.2" fill="#859900" fill-opacity="0.6"/><rect x="1797" y="175.6" width="1" height="1.2" fill="#859900" fill-opacity="0.6"/><rect x="1798" y="175.6" width="1" height="1.2" fill="#859900" fill-opacity="0.6"/><rect x="1799" y="175.9" width="1" height="0.8" fill="#93a1a1" fill-opacity="0.45"/><rect x="1801" y="175.5" width="1" height="1.7" fill="#93a1a1" fill-opacity="0.55"/><rect x="1802" y="175.6" width="1" height="1.2" fill="#93a1a1" fill-opacity="0.6"/><rect x="1803" y="175.6" width="1" height="1.2" fill="#93a1a1" fill-opacity="0.6"/><rect x="1804" y="175.6" width="1" height="1.2" fill="#93a1a1" fill-opacity="0.6"/><rect x="1805" y="175.0" width="1" height="1.8" fill="#93a1a1" fill-opacity="0.6"/><rect x="1806" y="175.6" width="1" height="1.2" fill="#93a1a1" fill-opacity="0.6"/><rect x="1807" y="175.6" width="1" height="1.2" fill="#93a1a1" fill-opacity="0.6"/><rect x="1808" y="175.9" width="1" height="0.8" fill="#93a1a1" fill-opacity="0.45"/><rect x="1791" y="177.0" width="1" height="1.8" fill="#d4cfc0" fill-opacity="0.6"/><rect x="1791" y="179.6" width="1" height="1.2" fill="#268bd2" fill-opacity="0.6"/><rect x="1792" y="179.9" width="1" height="0.8" fill="#93a1a1" fill-opacity="0.45"/><rect x="1793" y="179.0" width="1" height="1.8" fill="#93a1a1" fill-opacity="0.6"/><rect x="1794" y="179.6" width="1" height="1.2" fill="#93a1a1" fill-opacity="0.6"/><rect x="1795" y="179.0" width="1" height="1.8" fill="#93a1a1" fill-opacity="0.6"/><rect x="1796" y="179.0" width="1" height="1.8" fill="#93a1a1" fill-opacity="0.6"/><rect x="1797" y="179.6" width="1" height="1.2" fill="#93a1a1" fill-opacity="0.6"/><rect x="1798" y="179.6" width="1" height="1.2" fill="#93a1a1" fill-opacity="0.6"/><rect x="1799" y="179.0" width="1" height="1.8" fill="#d4cfc0" fill-opacity="0.6"/><rect x="1793" y="181.6" width="1" height="1.2" fill="#859900" fill-opacity="0.6"/><rect x="1794" y="181.6" width="1" height="1.2" fill="#859900" fill-opacity="0.6"/><rect x="1795" y="181.6" width="1" height="1.2" fill="#859900" fill-opacity="0.6"/><rect x="1796" y="181.5" width="1" height="1.7" fill="#859900" fill-opacity="0.55"/><rect x="1797" y="181.6" width="1" height="1.2" fill="#859900" fill-opacity="0.6"/><rect x="1798" y="181.6" width="1" height="1.2" fill="#859900" fill-opacity="0.6"/><rect x="1799" y="181.9" width="1" height="0.8" fill="#93a1a1" fill-opacity="0.45"/><rect x="1801" y="181.0" width="1" height="1.8" fill="#d33682" fill-opacity="0.6"/><rect x="1802" y="181.0" width="1" height="1.8" fill="#d33682" fill-opacity="0.6"/><rect x="1803" y="181.5" width="1" height="1.7" fill="#859900" fill-opacity="0.55"/><rect x="1804" y="181.6" width="1" height="1.2" fill="#859900" fill-opacity="0.6"/><rect x="1806" y="181.6" width="1" height="1.2" fill="#93a1a1" fill-opacity="0.6"/><rect x="1807" y="181.6" width="1" height="1.2" fill="#93a1a1" fill-opacity="0.6"/><rect x="1808" y="181.0" width="1" height="1.8" fill="#93a1a1" fill-opacity="0.6"/><rect x="1809" y="181.6" width="1" height="1.2" fill="#93a1a1" fill-opacity="0.6"/><rect x="1810" y="181.9" width="1" height="0.8" fill="#93a1a1" fill-opacity="0.45"/><rect x="1793" y="183.5" width="1" height="1.7" fill="#859900" fill-opacity="0.55"/><rect x="1794" y="183.6" width="1" height="1.2" fill="#859900" fill-opacity="0.6"/><rect x="1795" y="183.0" width="1" height="1.8" fill="#859900" fill-opacity="0.6"/><rect x="1796" y="183.0" width="1" height="1.8" fill="#859900" fill-opacity="0.6"/><rect x="1797" y="183.6" width="1" height="1.2" fill="#859900" fill-opacity="0.6"/><rect x="1798" y="183.6" width="1" height="1.2" fill="#859900" fill-opacity="0.6"/><rect x="1799" y="183.5" width="1" height="1.7" fill="#859900" fill-opacity="0.55"/><rect x="1800" y="183.9" width="1" height="0.8" fill="#93a1a1" fill-opacity="0.45"/><rect x="1802" y="183.0" width="1" height="1.8" fill="#d33682" fill-opacity="0.6"/><rect x="1803" y="183.0" width="1" height="1.8" fill="#d33682" fill-opacity="0.6"/><rect x="1804" y="183.5" width="1" height="1.7" fill="#859900" fill-opacity="0.55"/><rect x="1805" y="183.6" width="1" height="1.2" fill="#859900" fill-opacity="0.6"/><rect x="1807" y="183.0" width="1" height="1.8" fill="#d33682" fill-opacity="0.6"/><rect x="1808" y="183.0" width="1" height="1.8" fill="#d33682" fill-opacity="0.6"/><rect x="1809" y="183.5" width="1" height="1.7" fill="#859900" fill-opacity="0.55"/><rect x="1810" y="183.6" width="1" height="1.2" fill="#859900" fill-opacity="0.6"/><rect x="1811" y="183.9" width="1" height="0.8" fill="#93a1a1" fill-opacity="0.45"/><rect x="1793" y="185.0" width="1" height="1.8" fill="#859900" fill-opacity="0.6"/><rect x="1794" y="185.6" width="1" height="1.2" fill="#859900" fill-opacity="0.6"/><rect x="1795" y="185.6" width="1" height="1.2" fill="#859900" fill-opacity="0.6"/><rect x="1796" y="185.0" width="1" height="1.8" fill="#859900" fill-opacity="0.6"/><rect x="1797" y="185.6" width="1" height="1.2" fill="#859900" fill-opacity="0.6"/><rect x="1798" y="185.6" width="1" height="1.2" fill="#859900" fill-opacity="0.6"/><rect x="1799" y="185.9" width="1" height="0.8" fill="#859900" fill-opacity="0.45"/><rect x="1800" y="185.6" width="1" height="1.2" fill="#859900" fill-opacity="0.6"/><rect x="1801" y="185.6" width="1" height="1.2" fill="#859900" fill-opacity="0.6"/><rect x="1802" y="185.0" width="1" height="1.8" fill="#859900" fill-opacity="0.6"/><rect x="1803" y="185.6" width="1" height="1.2" fill="#859900" fill-opacity="0.6"/><rect x="1804" y="185.6" width="1" height="1.2" fill="#859900" fill-opacity="0.6"/><rect x="1805" y="185.6" width="1" height="1.2" fill="#859900" fill-opacity="0.6"/><rect x="1806" y="185.9" width="1" height="0.8" fill="#93a1a1" fill-opacity="0.45"/><rect x="1808" y="185.0" width="1" height="1.8" fill="#d33682" fill-opacity="0.6"/><rect x="1809" y="185.0" width="1" height="1.8" fill="#d33682" fill-opacity="0.6"/><rect x="1810" y="185.5" width="1" height="1.7" fill="#859900" fill-opacity="0.55"/><rect x="1811" y="185.6" width="1" height="1.2" fill="#859900" fill-opacity="0.6"/><rect x="1812" y="185.9" width="1" height="0.8" fill="#93a1a1" fill-opacity="0.45"/><rect x="1793" y="187.0" width="1" height="1.8" fill="#859900" fill-opacity="0.6"/><rect x="1794" y="187.6" width="1" height="1.2" fill="#859900" fill-opacity="0.6"/><rect x="1795" y="187.6" width="1" height="1.2" fill="#859900" fill-opacity="0.6"/><rect x="1796" y="187.0" width="1" height="1.8" fill="#859900" fill-opacity="0.6"/><rect x="1797" y="187.5" width="1" height="1.7" fill="#859900" fill-opacity="0.55"/><rect x="1798" y="187.6" width="1" height="1.2" fill="#859900" fill-opacity="0.6"/><rect x="1799" y="187.6" width="1" height="1.2" fill="#859900" fill-opacity="0.6"/><rect x="1800" y="187.6" width="1" height="1.2" fill="#859900" fill-opacity="0.6"/><rect x="1801" y="187.6" width="1" height="1.2" fill="#859900" fill-opacity="0.6"/><rect x="1802" y="187.0" width="1" height="1.8" fill="#859900" fill-opacity="0.6"/><rect x="1803" y="187.9" width="1" height="0.8" fill="#93a1a1" fill-opacity="0.45"/><rect x="1805" y="187.5" width="1" height="1.7" fill="#93a1a1" fill-opacity="0.55"/><rect x="1806" y="187.6" width="1" height="1.2" fill="#93a1a1" fill-opacity="0.6"/><rect x="1807" y="187.6" width="1" height="1.2" fill="#93a1a1" fill-opacity="0.6"/><rect x="1808" y="187.6" width="1" height="1.2" fill="#93a1a1" fill-opacity="0.6"/><rect x="1809" y="187.6" width="1" height="1.2" fill="#93a1a1" fill-opacity="0.6"/><rect x="1810" y="187.9" width="1" height="0.8" fill="#93a1a1" fill-opacity="0.45"/><rect x="1793" y="189.0" width="1" height="1.8" fill="#859900" fill-opacity="0.6"/><rect x="1794" y="189.6" width="1" height="1.2" fill="#859900" fill-opacity="0.6"/><rect x="1795" y="189.6" width="1" height="1.2" fill="#859900" fill-opacity="0.6"/><rect x="1796" y="189.0" width="1" height="1.8" fill="#859900" fill-opacity="0.6"/><rect x="1797" y="189.9" width="1" height="0.8" fill="#859900" fill-opacity="0.45"/><rect x="1798" y="189.0" width="1" height="1.8" fill="#859900" fill-opacity="0.6"/><rect x="1799" y="189.6" width="1" height="1.2" fill="#859900" fill-opacity="0.6"/><rect x="1800" y="189.6" width="1" height="1.2" fill="#859900" fill-opacity="0.6"/><rect x="1801" y="189.6" width="1" height="1.2" fill="#859900" fill-opacity="0.6"/><rect x="1802" y="189.6" width="1" height="1.2" fill="#859900" fill-opacity="0.6"/><rect x="1803" y="189.6" width="1" height="1.2" fill="#859900" fill-opacity="0.6"/><rect x="1804" y="189.0" width="1" height="1.8" fill="#859900" fill-opacity="0.6"/><rect x="1805" y="189.6" width="1" height="1.2" fill="#859900" fill-opacity="0.6"/><rect x="1806" y="189.6" width="1" height="1.2" fill="#859900" fill-opacity="0.6"/><rect x="1807" y="189.6" width="1" height="1.2" fill="#859900" fill-opacity="0.6"/><rect x="1808" y="189.9" width="1" height="0.8" fill="#93a1a1" fill-opacity="0.45"/><rect x="1810" y="189.6" width="1" height="1.2" fill="#93a1a1" fill-opacity="0.6"/><rect x="1811" y="189.6" width="1" height="1.2" fill="#93a1a1" fill-opacity="0.6"/><rect x="1812" y="189.6" width="1" height="1.2" fill="#93a1a1" fill-opacity="0.6"/><rect x="1813" y="189.6" width="1" height="1.2" fill="#93a1a1" fill-opacity="0.6"/><rect x="1814" y="189.9" width="1" height="0.8" fill="#93a1a1" fill-opacity="0.45"/><rect x="1793" y="191.6" width="1" height="1.2" fill="#859900" fill-opacity="0.6"/><rect x="1794" y="191.6" width="1" height="1.2" fill="#859900" fill-opacity="0.6"/><rect x="1795" y="191.0" width="1" height="1.8" fill="#859900" fill-opacity="0.6"/><rect x="1796" y="191.6" width="1" height="1.2" fill="#859900" fill-opacity="0.6"/><rect x="1797" y="191.6" width="1" height="1.2" fill="#859900" fill-opacity="0.6"/><rect x="1798" y="191.9" width="1" height="0.8" fill="#93a1a1" fill-opacity="0.45"/><rect x="1800" y="191.0" width="1" height="1.8" fill="#cb4b16" fill-opacity="0.6"/><rect x="1801" y="191.0" width="1" height="1.8" fill="#cb4b16" fill-opacity="0.6"/><rect x="1802" y="191.0" width="1" height="1.8" fill="#cb4b16" fill-opacity="0.6"/><rect x="1803" y="191.0" width="1" height="1.8" fill="#cb4b16" fill-opacity="0.6"/><rect x="1804" y="191.0" width="1" height="1.8" fill="#cb4b16" fill-opacity="0.6"/><rect x="1805" y="191.0" width="1" height="1.8" fill="#cb4b16" fill-opacity="0.6"/><rect x="1806" y="191.0" width="1" height="1.8" fill="#cb4b16" fill-opacity="0.6"/><rect x="1807" y="191.9" width="1" height="0.8" fill="#93a1a1" fill-opacity="0.45"/><rect x="1791" y="193.0" width="1" height="1.8" fill="#d4cfc0" fill-opacity="0.6"/></svg>
<div id="status"></div>
<div style="position:absolute;left:53.20px;top:11.66px;height:22px;line-height:22px;font-size:16px;font-weight:normal;font-style:normal;color:#808d90;white-space:pre;font-family:'Liberation Sans',sans-serif;">File</div>
<div style="position:absolute;left:97.30px;top:11.66px;height:22px;line-height:22px;font-size:16px;font-weight:normal;font-style:normal;color:#808d90;white-space:pre;font-family:'Liberation Sans',sans-serif;">Edit</div>
<div style="position:absolute;left:144.30px;top:11.66px;height:22px;line-height:22px;font-size:16px;font-weight:normal;font-style:normal;color:#808d90;white-space:pre;font-family:'Liberation Sans',sans-serif;">Selection</div>
<div style="position:absolute;left:229.30px;top:11.66px;height:22px;line-height:22px;font-size:16px;font-weight:normal;font-style:normal;color:#808d90;white-space:pre;font-family:'Liberation Sans',sans-serif;">View</div>
<div style="position:absolute;left:283.70px;top:11.66px;height:22px;line-height:22px;font-size:16px;font-weight:normal;font-style:normal;color:#808d90;white-space:pre;font-family:'Liberation Sans',sans-serif;">Go</div>
<div style="position:absolute;left:325.20px;top:11.66px;height:22px;line-height:22px;font-size:16px;font-weight:normal;font-style:normal;color:#808d90;white-space:pre;font-family:'Liberation Sans',sans-serif;">Run</div>
<div style="position:absolute;left:373.20px;top:11.66px;height:22px;line-height:22px;font-size:16px;font-weight:normal;font-style:normal;color:#808d90;white-space:pre;font-family:'Liberation Sans',sans-serif;">Terminal</div>
<div style="position:absolute;left:453.00px;top:11.66px;height:22px;line-height:22px;font-size:16px;font-weight:normal;font-style:normal;color:#808d90;white-space:pre;font-family:'Liberation Sans',sans-serif;">Help</div>
<div style="position:absolute;left:627.5px;top:7.5px;width:730px;height:29px;border:1px solid #34494f;border-radius:6px;background:#1b3139"></div>
<div style="position:absolute;left:930.20px;top:11.27px;height:21px;line-height:21px;font-size:14.8px;font-weight:normal;font-style:normal;color:#93a1a1;white-space:pre;font-family:'Liberation Sans',sans-serif;">Creative-Code-Week-9</div>
<div style="position:absolute;left:84.50px;top:56.75px;height:19px;line-height:19px;font-size:13.7px;font-weight:normal;font-style:normal;color:#93a1a1;white-space:pre;font-family:'Liberation Sans',sans-serif;transform:scaleX(0.84);transform-origin:0 0;">EXPLORER</div>
<div style="position:absolute;left:60px;top:88px;width:320px;height:27px;background:#1a343c"></div>
<div style="position:absolute;left:84.20px;top:93.50px;height:18px;line-height:18px;font-size:13px;font-weight:bold;font-style:normal;color:#d4d9d9;white-space:pre;font-family:'Liberation Sans',sans-serif;">CREATIVE-CODE-WEEK-9</div>
<div style="position:absolute;left:60px;top:225.5px;width:320px;height:27.5px;background:#003441"></div>
<div style="position:absolute;left:101.80px;top:118.99px;height:22px;line-height:22px;font-size:15.6px;font-weight:normal;font-style:normal;color:#d3d8d8;white-space:pre;font-family:'Liberation Sans',sans-serif;">.vscode</div>
<div style="position:absolute;left:101.80px;top:147.31px;height:21px;line-height:21px;font-size:14.7px;font-weight:normal;font-style:normal;color:#d3d8d8;white-space:pre;font-family:'Liberation Sans',sans-serif;">assets</div>
<div style="position:absolute;left:101.80px;top:173.15px;height:23px;line-height:23px;font-size:16.6px;font-weight:normal;font-style:normal;color:#d3d8d8;white-space:pre;font-family:'Liberation Sans',sans-serif;">index.html</div>
<div style="position:absolute;left:101.80px;top:202.10px;height:21px;line-height:21px;font-size:15.3px;font-weight:normal;font-style:normal;color:#d3d8d8;white-space:pre;font-family:'Liberation Sans',sans-serif;">sketch.js</div>
<div style="position:absolute;left:101.80px;top:229.70px;height:21px;line-height:21px;font-size:15px;font-weight:normal;font-style:normal;color:#d3d8d8;white-space:pre;font-family:'Liberation Sans',sans-serif;">style.css</div>
<div style="position:absolute;left:80.60px;top:202.53px;height:18px;line-height:18px;font-size:13.2px;font-weight:bold;font-style:normal;color:#cbcb41;white-space:pre;font-family:'Liberation Sans',sans-serif;transform:scaleX(0.79);transform-origin:0 0;">JS</div>
<div style="position:absolute;left:60px;top:938px;width:320px;height:55px;background:#1a343c"></div>
<div style="position:absolute;left:84.30px;top:943.50px;height:18px;line-height:18px;font-size:13px;font-weight:bold;font-style:normal;color:#d4d9d9;white-space:pre;font-family:'Liberation Sans',sans-serif;">OUTLINE</div>
<div style="position:absolute;left:84.60px;top:970.40px;height:18px;line-height:18px;font-size:13px;font-weight:bold;font-style:normal;color:#d4d9d9;white-space:pre;font-family:'Liberation Sans',sans-serif;">TIMELINE</div>
<div style="position:absolute;left:419.00px;top:56.78px;height:20px;line-height:20px;font-size:14.5px;font-weight:normal;font-style:italic;color:#e0e4e4;white-space:pre;font-family:'Liberation Sans',sans-serif;">style.css</div>
<div style="position:absolute;left:427.00px;top:92.10px;height:21px;line-height:21px;font-size:15px;font-weight:normal;font-style:normal;color:#b9c2c2;white-space:pre;font-family:'Liberation Sans',sans-serif;">style.css</div>
<div style="position:absolute;left:529.00px;top:92.10px;height:21px;line-height:21px;font-size:15px;font-weight:normal;font-style:normal;color:#b9c2c2;white-space:pre;font-family:'Liberation Sans',sans-serif;letter-spacing:0.8px;">html</div>
<div style="position:absolute;left:73.60px;top:996.88px;height:20px;line-height:20px;font-size:14.5px;font-weight:normal;font-style:normal;color:#93a1a1;white-space:pre;font-family:'Liberation Sans',sans-serif;">0</div>
<div style="position:absolute;left:107.80px;top:996.88px;height:20px;line-height:20px;font-size:14.5px;font-weight:normal;font-style:normal;color:#93a1a1;white-space:pre;font-family:'Liberation Sans',sans-serif;">0</div>
<div style="position:absolute;left:157.10px;top:996.88px;height:20px;line-height:20px;font-size:14.5px;font-weight:normal;font-style:normal;color:#93a1a1;white-space:pre;font-family:'Liberation Sans',sans-serif;">0</div>
<div style="position:absolute;left:1470.60px;top:996.27px;height:21px;line-height:21px;font-size:14.8px;font-weight:normal;font-style:normal;color:#93a1a1;white-space:pre;font-family:'Liberation Sans',sans-serif;transform:scaleX(0.95);transform-origin:0 0;">Ln 1, Col 1</div>
<div style="position:absolute;left:1559.20px;top:996.27px;height:21px;line-height:21px;font-size:14.8px;font-weight:normal;font-style:normal;color:#93a1a1;white-space:pre;font-family:'Liberation Sans',sans-serif;transform:scaleX(0.915);transform-origin:0 0;">Spaces: 2</div>
<div style="position:absolute;left:1640.40px;top:996.27px;height:21px;line-height:21px;font-size:14.8px;font-weight:normal;font-style:normal;color:#93a1a1;white-space:pre;font-family:'Liberation Sans',sans-serif;transform:scaleX(0.95);transform-origin:0 0;">UTF-8</div>
<div style="position:absolute;left:1700.00px;top:996.27px;height:21px;line-height:21px;font-size:14.8px;font-weight:normal;font-style:normal;color:#93a1a1;white-space:pre;font-family:'Liberation Sans',sans-serif;transform:scaleX(0.83);transform-origin:0 0;">LF</div>
<div style="position:absolute;left:1728.40px;top:996.27px;height:21px;line-height:21px;font-size:14.8px;font-weight:normal;font-style:normal;color:#93a1a1;white-space:pre;font-family:'Liberation Sans',sans-serif;transform:scaleX(0.79);transform-origin:0 0;">CSS</div>
<div style="position:absolute;left:1793.00px;top:996.27px;height:21px;line-height:21px;font-size:14.8px;font-weight:normal;font-style:normal;color:#93a1a1;white-space:pre;font-family:'Liberation Sans',sans-serif;transform:scaleX(0.96);transform-origin:0 0;">Port : 5501</div>
<svg style="position:absolute;left:0;top:0" width="1918" height="1018"><g transform="translate(12,12) scale(0.2)"><path fill="#0065a9" d="M96.46 10.8L75.86.87a6.22 6.22 0 0 0-7.1 1.21L29.35 38.04 12.19 25.01a4.16 4.16 0 0 0-5.32.24L1.37 30.25a4.17 4.17 0 0 0 0 6.17L16.25 50 1.36 63.58a4.17 4.17 0 0 0 0 6.17l5.51 5.01a4.16 4.16 0 0 0 5.32.24l17.16-13.03L68.77 97.93a6.22 6.22 0 0 0 7.1 1.2l20.6-9.92A6.25 6.25 0 0 0 100 83.57V16.42a6.25 6.25 0 0 0-3.54-5.63zM75.02 72.7L45.1 50l29.92-22.7v45.4z"/><path fill="#007acc" d="M1.37 63.58a4.17 4.17 0 0 0 0 6.17l5.51 5.01a4.16 4.16 0 0 0 5.32.24l17.16-13.03L68.77 97.93a6.22 6.22 0 0 0 7.1 1.2l-.75-26.43L45.1 50z" opacity="0.9"/><path fill="#1f9cf0" d="M75.86 99.13a6.22 6.22 0 0 1-7.1-1.2 3.65 3.65 0 0 0 6.23-2.58V4.65a3.65 3.65 0 0 0-6.23-2.58 6.22 6.22 0 0 1 7.1-1.2l20.6 9.9A6.25 6.25 0 0 1 100 16.42v67.15a6.25 6.25 0 0 1-3.54 5.63z"/></g><path fill="none" stroke="#a3acab" stroke-width="1.3" stroke-linecap="round" stroke-linejoin="round" d="M575.8,22.6 H560.8 M567.6,16 L560.8,22.6 L567.6,29.2"/><path fill="none" stroke="#a3acab" stroke-width="1.3" stroke-linecap="round" stroke-linejoin="round" d="M593,22.6 H608.2 M601.2,16 L608.2,22.6 L601.2,29.2"/><circle cx="919" cy="18.3" r="5.9" fill="none" stroke="#8c9c9e" stroke-width="1.3"/><path d="M914.8,22.5 L908.6,28.8" stroke="#8c9c9e" stroke-width="1.4" stroke-linecap="round"/><rect x="1625.3" y="13.6" width="17" height="16.6" rx="2" fill="none" stroke="#8e9899" stroke-width="1.3"/><rect x="1625.3" y="13.6" width="7.3" height="16.6" rx="1" fill="#8e9899"/><rect x="1657.8" y="13.6" width="17" height="16.6" rx="2" fill="none" stroke="#8e9899" stroke-width="1.3"/><path d="M1657.8,24.6 H1674.8" stroke="#8e9899" stroke-width="1.3"/><rect x="1690.7" y="13.6" width="17" height="16.6" rx="2" fill="none" stroke="#8e9899" stroke-width="1.3"/><path d="M1700.5,13.6 V30.2" stroke="#8e9899" stroke-width="1.3"/><rect x="1724.5" y="14.9" width="6.2" height="13.8" rx="1.6" fill="none" stroke="#8e9899" stroke-width="1.3"/><rect x="1734.3" y="14.9" width="5.2" height="5" rx="1.5" fill="none" stroke="#8e9899" stroke-width="1.3"/><rect x="1734.3" y="23.7" width="5.2" height="5" rx="1.5" fill="none" stroke="#8e9899" stroke-width="1.3"/><path d="M1770.7,21.6 H1784" stroke="#a8b0b0" stroke-width="1"/><rect x="1827.3" y="17.4" width="10" height="10" rx="1.5" fill="none" stroke="#a8b0b0" stroke-width="1"/><path d="M1829.8,15.4 H1837.5 Q1839.5,15.4 1839.5,17.4 V25" fill="none" stroke="#a8b0b0" stroke-width="1"/><path d="M1885.2,15.6 L1898.2,27.8 M1898.2,15.6 L1885.2,27.8" stroke="#a8b0b0" stroke-width="1.1"/><rect x="0" y="44" width="2" height="59.5" fill="#ffffff"/><g fill="none" stroke="#ffffff" stroke-width="2.1" stroke-linejoin="round"><path d="M24.9,60.2 H36.1 L41.5,65.6 V79.2 Q41.5,80.4 40.3,80.4 H26.1 Q24.9,80.4 24.9,79.2 V61.4 Q24.9,60.2 26.1,60.2 Z"/><path d="M36.1,60.5 V66.3 H41.3"/><path d="M24.9,67.3 H18.9 Q17.5,67.3 17.5,68.7 V86.3 Q17.5,87.7 18.9,87.7 H32.6 Q34,87.7 34,86.3 V80.4"/></g><g fill="none" stroke="#6d8f96" stroke-width="1.8" stroke-linecap="round"><circle cx="34.2" cy="129" r="9.3"/><path d="M27.6,136 L17.2,147.6"/></g><g fill="none" stroke="#6d8f96" stroke-width="1.7"><circle cx="23.5" cy="183.2" r="3.4"/><circle cx="23.5" cy="204.3" r="3.4"/><circle cx="36.6" cy="188.8" r="3.4"/><path d="M23.5,186.6 V200.9"/><path d="M36.6,192.2 Q36.6,196.8 31.5,196.8 H28 Q23.5,196.8 23.5,200"/></g><g fill="none" stroke="#6d8f96" stroke-width="1.7" stroke-linejoin="round"><path d="M25.7,253 V239.9 L44.2,251.6 L32.2,259.6"/><path d="M18.9,259.6 Q18.9,254.9 23.3,254.9 Q27.7,254.9 27.7,259.6 V264 Q27.7,268.1 23.3,268.1 Q18.9,268.1 18.9,264 Z M18.9,259.6 H27.7"/><path d="M15.4,256.4 L18.6,258.9 M15.2,262.3 H18.8 M15.4,268 L18.6,265.6 M31.2,256.4 L28,258.9 M31.4,262.3 H27.8 M31.2,268 L28,265.6"/></g><g fill="none" stroke="#6d8f96" stroke-width="1.6" stroke-linejoin="round"><path d="M15.8,305.5 H27.2 V316.8 H38.6 V328 H15.8 Z M15.8,316.8 H27.2 V328"/><rect x="32.8" y="300" width="11.6" height="10.4" rx="1.2"/></g><g fill="none" stroke="#6d8f96" stroke-width="1.9"><circle cx="30" cy="903" r="14"/><circle cx="30" cy="900.3" r="6"/><path d="M21.3,913.4 Q23.6,906.5 30,906.5 Q36.4,906.5 38.7,913.4"/></g><path fill="none" stroke="#6d8f96" stroke-width="2.1" stroke-linejoin="round" d="M27.49,953.01 L27.67,949.09 L32.33,949.09 L32.51,953.01 L33.41,954.88 L35.36,954.19 L38.26,951.55 L41.55,954.84 L38.91,957.74 L38.22,959.69 L40.09,960.59 L44.01,960.77 L44.01,965.43 L40.09,965.61 L38.22,966.51 L38.91,968.46 L41.55,971.36 L38.26,974.65 L35.36,972.01 L33.41,971.32 L32.51,973.19 L32.33,977.11 L27.67,977.11 L27.49,973.19 L26.59,971.32 L24.64,972.01 L21.74,974.65 L18.45,971.36 L21.09,968.46 L21.78,966.51 L19.91,965.61 L15.99,965.43 L15.99,960.77 L19.91,960.59 L21.78,959.69 L21.09,957.74 L18.45,954.84 L21.74,951.55 L24.64,954.19 L26.59,954.88 Z"/><circle cx="30" cy="963.1" r="3.6" fill="none" stroke="#6d8f96" stroke-width="2.1"/><g fill="#9fadad"><circle cx="344.8" cy="66" r="1.3"/><circle cx="351.5" cy="66" r="1.3"/><circle cx="358.2" cy="66" r="1.3"/></g><path fill="none" stroke="#c9cfcf" stroke-width="1.3" stroke-linecap="round" stroke-linejoin="round" d="M66.8,98.2 L72.6,104.6 L78.4,98.2"/><path fill="none" stroke="#c9cfcf" stroke-width="1.3" stroke-linecap="round" stroke-linejoin="round" d="M86.4,123.8 L92.6,129.1 L86.4,134.4"/><path fill="none" stroke="#c9cfcf" stroke-width="1.3" stroke-linecap="round" stroke-linejoin="round" d="M86.4,151.3 L92.6,156.6 L86.4,161.9"/><path fill="none" stroke="#c9cfcf" stroke-width="1.3" stroke-linecap="round" stroke-linejoin="round" d="M69.7,945.5 L76.4,951 L69.7,956.5"/><path fill="none" stroke="#c9cfcf" stroke-width="1.3" stroke-linecap="round" stroke-linejoin="round" d="M69.7,972.5 L76.4,978 L69.7,983.5"/><path d="M86,178.5 L81.6,183.1 L86,187.7 M88.6,178.5 L93,183.1 L88.6,187.7" fill="none" stroke="#e8673a" stroke-width="1.6"/><path d="M402.90,60.00 L401.10,70.20 M407.60,60.00 L405.80,70.20 M399.10,63.10 L409.90,63.10 M398.70,66.70 L409.40,66.70" stroke="#5a9fc4" stroke-width="1.6" fill="none"/><path d="M410.40,95.80 L408.60,106.00 M415.10,95.80 L413.30,106.00 M406.60,98.90 L417.40,98.90 M406.20,102.50 L416.90,102.50" stroke="#5a9fc4" stroke-width="1.6" fill="none"/><path d="M85.69,232.91 L83.85,243.31 M90.48,232.91 L88.65,243.31 M81.81,236.07 L92.83,236.07 M81.40,239.74 L92.32,239.74" stroke="#5a9fc4" stroke-width="1.6" fill="none"/><rect x="1851.8" y="57.5" width="16" height="15.6" rx="2" fill="none" stroke="#c5cccc" stroke-width="1.3"/><path d="M1859.8,57.5 V73.1" stroke="#c5cccc" stroke-width="1.3"/><g fill="#c5cccc"><circle cx="1884.8" cy="66" r="1.3"/><circle cx="1891.5" cy="66" r="1.3"/><circle cx="1898.2" cy="66" r="1.3"/></g><rect x="499" y="53" width="25" height="25" rx="5" fill="#1b3a42"/><path d="M506,60.8 L517,71.4 M517,60.8 L506,71.4" stroke="#e3e6e6" stroke-width="1.3"/><path fill="none" stroke="#b3bdbd" stroke-width="1.2" stroke-linecap="round" stroke-linejoin="round" d="M492.6,95.4 L498.4,101 L492.6,106.5"/><g fill="none" stroke="#ee9d28" stroke-width="1.25" stroke-linejoin="round"><path d="M514.01,95 L512.11,93.09 L507.59,97.61 L509.49,99.51 Z"/><path d="M511.9,99.2 V105.6 H519.3 M511.9,99.9 H519.3"/><path d="M523.45,99.47 L522.03,98.05 L519.35,100.73 L520.77,102.15 Z"/><path d="M523.45,105.77 L522.03,104.35 L519.35,107.03 L520.77,108.45 Z"/></g><rect x="0" y="993" width="43" height="25" fill="#1b6e6d"/><path d="M15.5,1002.9 L21,1007.8 L15.5,1012.8 M27.2,998.4 L21.7,1003.2 L27.2,1007.8" fill="none" stroke="#ffffff" stroke-width="1.3"/><g fill="none" stroke="#93a1a1" stroke-width="1.2"><circle cx="61.8" cy="1005.8" r="7.2"/><path d="M58.8,1002.8 L64.8,1008.8 M64.8,1002.8 L58.8,1008.8"/><path d="M95.5,998.6 L102.6,1012.4 H88.4 Z"/><path d="M95.5,1003.5 V1008 M95.5,1009.6 V1010.8"/><circle cx="1780.5" cy="1005.8" r="7.3"/><path d="M1775.6,1011 L1785.6,1000.6"/><path d="M1887,1010.5 H1899 L1897.5,1008.5 V1004 Q1897.5,998.6 1893,998.6 Q1888.5,998.6 1888.5,1004 V1008.5 Z M1891.5,1012.6 H1894.5"/></g><g fill="none" stroke="#93a1a1" stroke-width="1.15"><circle cx="145.6" cy="1003.5" r="1.5"/><path d="M145.4,1005 L141.4,1013.4 M145.8,1005 L149.9,1013.4 M142.6,1011 H148.7"/><path d="M142.9,1000.2 Q141.1,1004 142.9,1007.7 M148.3,1000.2 Q150.1,1004 148.3,1007.7"/><path d="M140.7,998.3 Q137.7,1003.2 140.7,1008.2 M150.5,998.3 Q153.5,1003.2 150.5,1008.2"/></g><rect x="1903" y="115" width="1" height="878" fill="#163b44"/><rect x="1904" y="115" width="14" height="2" fill="#b01c1c"/></svg>
</body></html>
